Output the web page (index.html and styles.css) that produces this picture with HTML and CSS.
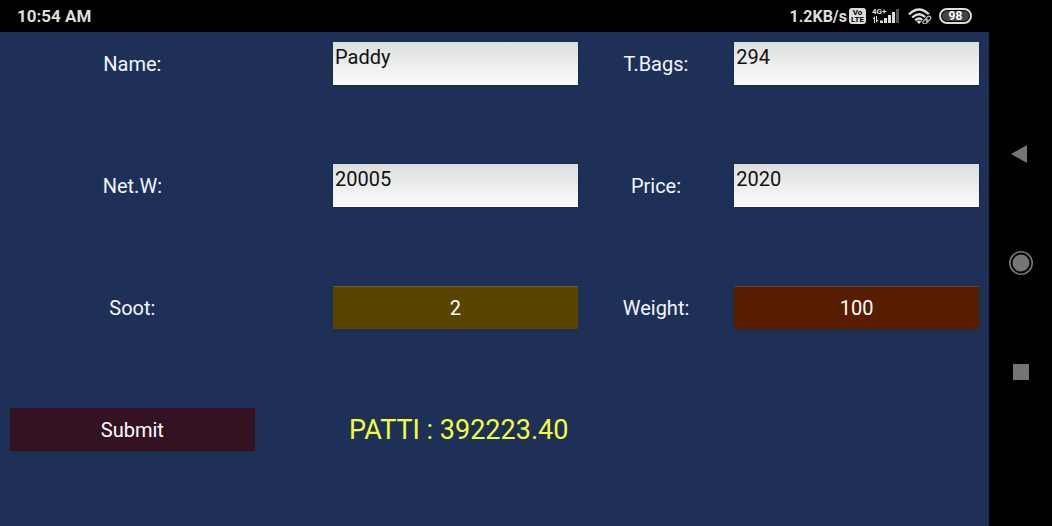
FILE: index.html
```html
<!DOCTYPE html>
<html lang="en">
<head>
  <meta charset="UTF-8">
  <meta name="viewport" content="width=device-width, initial-scale=1.0">
  <title>Patti</title>
  <link rel="stylesheet" href="styles.css">
</head>
<body>

  <!-- Status bar -->
  <header class="status-bar">
    <span class="clock">10:54 AM</span>
    <div class="status-icons">
      <span class="speed">1.2KB/s</span>
      <span class="volte"><span>Vo</span><span>LTE</span></span>
      <svg class="signal" width="28" height="16" viewBox="0 0 28 16" fill="#ddd">
        <text class="signal-text" x="0" y="6">4G+</text>
        <path d="M2 15V11H0.500L3 8V15zM4 8h1v4h1.500L4 15z"/>
        <path d="M8 12.500h3V15H8zM12 10h3v5h-3zM16 7h3v8h-3zM20 4h3v11h-3z"/>
        <path d="M24 1h3v14h-3z" fill="#555"/>
      </svg>
      <svg class="wifi" width="24" height="16" viewBox="0 0 24 16" fill="none" stroke="#ddd" stroke-width="2.400">
        <path d="M1 6.500Q11 -3.500 21 6.500M4.200 9.500Q11 3 17.800 9.500M7.200 12.300Q11 8.800 14.800 12.300"/>
        <path d="M8.500 13.500Q11 11.500 13.500 13.500L11 16z" fill="#ddd" stroke="none"/>
        <g transform="rotate(-45 19 12)" stroke="#000" stroke-width="4">
          <rect x="14.500" y="10.500" width="9" height="3" rx="1.500"/>
        </g>
        <g transform="rotate(-45 19 12)" stroke="#bbb" stroke-width="1.300">
          <rect x="14" y="10.200" width="5.500" height="3.600" rx="1.800"/>
          <rect x="18" y="10.200" width="5.500" height="3.600" rx="1.800"/>
        </g>
      </svg>
      <span class="battery"><span class="battery-level">98</span></span>
    </div>
  </header>

  <div class="screen">
    <!-- Form -->
    <main class="app">
      <form class="form">
        <label class="label left" for="name">Name:</label>
        <input class="field first" id="name" type="text" value="Paddy">
        <label class="label right" for="bags">T.Bags:</label>
        <input class="field second" id="bags" type="text" value="294">

        <label class="label left" for="net">Net.W:</label>
        <input class="field first" id="net" type="text" value="20005">
        <label class="label right" for="price">Price:</label>
        <input class="field second" id="price" type="text" value="2020">

        <label class="label left" for="soot">Soot:</label>
        <button class="btn soot first" id="soot" type="button">2</button>
        <label class="label right" for="weight">Weight:</label>
        <button class="btn weight second" id="weight" type="button">100</button>

        <button class="btn submit left" type="button">Submit</button>
        <output class="result first">PATTI : 392223.40</output>
      </form>
    </main>

    <!-- Navigation buttons -->
    <nav class="nav-bar">
      <button class="nav-btn" type="button" aria-label="Back">
        <svg width="26" height="26" viewBox="0 0 26 26"><path d="M3 13L19 4V22z" fill="#757575"/></svg>
      </button>
      <button class="nav-btn" type="button" aria-label="Home">
        <svg width="26" height="26" viewBox="0 0 26 26">
          <circle cx="13" cy="13" r="11.200" fill="none" stroke="#757575" stroke-width="1.600"/>
          <circle cx="13" cy="13" r="8.500" fill="#757575"/>
        </svg>
      </button>
      <button class="nav-btn" type="button" aria-label="Recent apps">
        <svg width="26" height="26" viewBox="0 0 26 26"><path d="M5 5h16v16H5z" fill="#757575"/></svg>
      </button>
    </nav>
  </div>

</body>
</html>
```
FILE: styles.css
```css
* {
  box-sizing: border-box;
}

body {
  margin: 0;
  min-height: 100vh;
  display: flex;
  flex-direction: column;
  background: #000;
  color: #f2f6ff;
  font-family: Roboto, sans-serif;
  font-size: 20px;
}

/* ===== Status bar ===== */
.status-bar {
  display: flex;
  justify-content: space-between;
  align-items: center;
  height: 32px;
  padding: 0 80px 0 17px;
  color: #ddd;
  font-size: 16px;
  font-weight: bold;
}
.clock {
  font-size: 17px;
}
.status-icons {
  display: flex;
  align-items: center;
}
.volte {
  display: flex;
  flex-direction: column;
  align-items: center;
  justify-content: center;
  width: 17px;
  height: 16px;
  margin: 0 6px 0 2px;
  border-radius: 3px;
  background: #ddd;
  color: #000;
  font-size: 8px;
  line-height: 7px;
}
.signal {
  margin-right: 8px;
}
.signal-text {
  font-size: 8px;
}
.wifi {
  margin-right: 7px;
}
.battery {
  width: 33px;
  height: 16px;
  padding: 1px;
  border: 2px solid #ddd;
  border-radius: 8px;
}
.battery-level {
  display: block;
  border-radius: 5px;
  background: #444;
  color: #fff;
  font-size: 12px;
  line-height: 10px;
  text-align: center;
}

/* ===== Form ===== */
.screen {
  flex: 1;
  display: flex;
}
.app {
  flex: 1;
  padding: 10px;
  background: #1e3058;
}
.form {
  display: grid;
  grid-template-columns: 25fr 8fr 25fr 16fr 25fr;
  grid-auto-rows: 43px;
  row-gap: 79px;
}
.left {
  grid-column: 1;
}
.first {
  grid-column: 3;
}
.right {
  grid-column: 4;
}
.second {
  grid-column: 5;
}
.label {
  display: flex;
  align-items: center;
  justify-content: center;
}
.field {
  width: 100%;
  min-width: 0;
  padding: 0 2px 14px;
  border: none;
  background: linear-gradient(#dcdedd, #fcfcfc);
  color: #111;
  font: inherit;
  box-shadow: 0 0 1px #101a33;
}
.btn {
  padding: 0;
  border: none;
  color: #fff;
  font: inherit;
  box-shadow: 0 1px 2px rgba(40, 40, 50, 0.8);
}
.soot {
  border-top: 1px solid #6b5d35;
  background: #594500;
}
.weight {
  border-top: 1px solid #6b3c2c;
  background: #581c00;
}
.submit {
  background: #341222;
}
.result {
  align-self: center;
  padding-left: 16px;
  color: #f3ff3a;
  font-size: 27px;
  white-space: nowrap;
}

/* ===== Navigation buttons ===== */
.nav-bar {
  width: 63px;
  display: flex;
  flex-direction: column;
  align-items: center;
  gap: 83px;
  padding-top: 109px;
}
.nav-btn {
  display: flex;
  padding: 0;
  border: none;
  background: none;
}
```
